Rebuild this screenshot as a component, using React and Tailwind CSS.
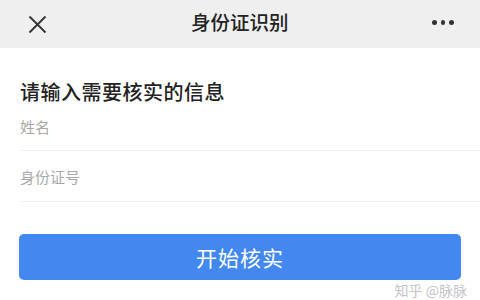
import React from "react";

const font = { fontFamily: '"Noto Sans CJK SC", "Noto Sans", sans-serif' };

export default function App() {
  return (
    <div className="w-[480px] h-[300px] bg-white overflow-hidden relative" style={font}>
      {/* top bar */}
      <div className="h-[48px] bg-[#efefef] flex items-center justify-between px-[28px]">
        <svg width="19" height="19" viewBox="0 0 19 19" className="text-[#333]">
          <path d="M1.5 1.5 L17.5 17.5 M17.5 1.5 L1.5 17.5" stroke="currentColor" strokeWidth="1.8" fill="none" />
        </svg>
        <div className="text-[19.5px] font-medium text-[#222] leading-none -mt-[4px]">身份证识别</div>
        <div className="flex items-center gap-[4px] -mr-[2px] -mt-[3px]">
          <span className="w-[4.5px] h-[4.5px] rounded-full bg-[#333]" />
          <span className="w-[4.5px] h-[4.5px] rounded-full bg-[#333]" />
          <span className="w-[4.5px] h-[4.5px] rounded-full bg-[#333]" />
        </div>
      </div>

      {/* form */}
      <div className="pl-[20px] pt-[30px]">
        <div className="text-[20px] font-medium text-[#222] leading-[28px] tracking-[0.5px]">请输入需要核实的信息</div>
        <div className="h-[45px] border-b border-[#f0f0f0] pt-[11px] text-[15px] text-[#a8a8a8] leading-[20px]">姓名</div>
        <div className="h-[51px] border-b border-[#f0f0f0] pt-[16px] text-[15px] text-[#a8a8a8] leading-[20px]">身份证号</div>
      </div>

      <div className="px-[19px] pt-[32px]">
        <button className="w-full h-[46px] rounded-[5px] bg-[#4288ee] text-white text-[21px] leading-none flex items-center justify-center tracking-[1px]">
          开始核实
        </button>
      </div>

      <div className="absolute right-[13px] bottom-[1px] text-[14px] leading-[18px] text-[#c4c4c4]">知乎 @脉脉</div>
    </div>
  );
}
